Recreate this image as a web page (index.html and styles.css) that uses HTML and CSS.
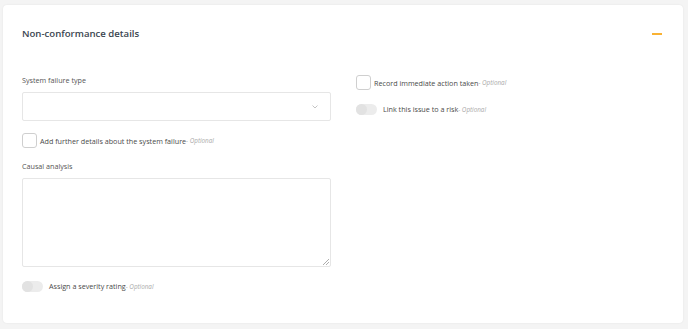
FILE: index.html
```html
<!DOCTYPE html>
<html>
<head>
<meta charset="utf-8">
<link rel="stylesheet" href="styles.css">
</head>
<body>
<div class="card">
  <div class="card-head">
    <h2 class="title">Non-conformance details</h2>
    <span class="collapse"></span>
  </div>
  <div class="grid">
    <div class="col">
      <label class="label">System failure type</label>
      <div class="select">
        <svg class="chev" width="6" height="4" viewBox="0 0 6 4"><path d="M0.5 0.5 L3 3 L5.5 0.5" fill="none" stroke="#b5b5b5" stroke-width="0.8"/></svg>
      </div>
      <div class="check-row first">
        <span class="checkbox"></span>
        <span class="text">Add further details about the system failure</span><span class="opt">- Optional</span>
      </div>
      <label class="label">Causal analysis</label>
      <div class="textarea">
        <svg class="grip" width="6" height="6" viewBox="0 0 6 6"><path d="M6 0 L0 6 M6 3 L3 6" stroke="#999" stroke-width="0.8"/></svg>
      </div>
      <div class="toggle-row">
        <span class="toggle"><span class="knob"></span></span>
        <span class="text">Assign a severity rating</span><span class="opt">- Optional</span>
      </div>
    </div>
    <div class="col right">
      <div class="check-row">
        <span class="checkbox"></span>
        <span class="text">Record immediate action taken</span><span class="opt">- Optional</span>
      </div>
      <div class="toggle-row r">
        <span class="toggle"><span class="knob"></span></span>
        <span class="text">Link this issue to a risk</span><span class="opt">- Optional</span>
      </div>
    </div>
  </div>
</div>
</body>
</html>
```
FILE: styles.css
```css
* { box-sizing: border-box; }
html, body { margin: 0; padding: 0; }
body {
  background: #f4f4f4;
  font-family: "Open Sans", "Liberation Sans", sans-serif;
  color: #444;
  padding: 5px 5px 6px 3px;
}
.card {
  background: #fff;
  border-radius: 4px;
  box-shadow: 0 0 2px rgba(0,0,0,0.08);
  height: 318px;
  padding: 0 19px 0 19px;
}
.card-head {
  display: flex;
  align-items: center;
  justify-content: space-between;
  height: 56px;
  padding-top: 1px;
}
.title {
  margin: 0;
  font-size: 9.6px;
  font-weight: 600;
  color: #3a4550;
}
.collapse {
  width: 10px;
  height: 2px;
  background: #f9b233;
  margin-right: 2px;
}
.grid {
  display: grid;
  grid-template-columns: 309px 306px;
  column-gap: 25px;
  padding-top: 14px;
}
.col { display: flex; flex-direction: column; }
.label {
  font-size: 7.2px;
  color: #555;
  line-height: 10px;
  margin-bottom: 7px;
}
.select {
  height: 29px;
  border: 1px solid #e6e6e6;
  border-radius: 2px;
  position: relative;
  display: flex;
  align-items: center;
  justify-content: flex-end;
  padding-right: 12px;
}
.check-row {
  display: flex;
  align-items: center;
  height: 15px;
}
.check-row.first { margin-top: 12px; margin-bottom: 13px; }
.checkbox {
  width: 15px;
  height: 15px;
  border: 1px solid #cfcfcf;
  border-radius: 3px;
  margin-right: 3px;
  flex: none;
}
.text {
  font-size: 7.2px;
  color: #4a4a4a;
}
.opt {
  font-size: 6.3px;
  font-style: italic;
  color: #aaa;
}
.textarea {
  height: 89px;
  border: 1px solid #e6e6e6;
  border-radius: 2px;
  position: relative;
  display: flex;
  align-items: flex-end;
  justify-content: flex-end;
  padding: 1px;
}
.toggle-row {
  display: flex;
  align-items: center;
  margin-top: 13px;
  height: 12px;
}
.toggle {
  width: 21px;
  height: 11px;
  border-radius: 6px;
  background: #ececec;
  position: relative;
  margin-right: 6px;
  flex: none;
  display: flex;
  align-items: center;
}
.knob {
  width: 11px;
  height: 11px;
  border-radius: 50%;
  background: #e2e2e2;
}
.right .check-row { margin-top: 0; }
.toggle-row.r { margin-top: 13px; }
```
